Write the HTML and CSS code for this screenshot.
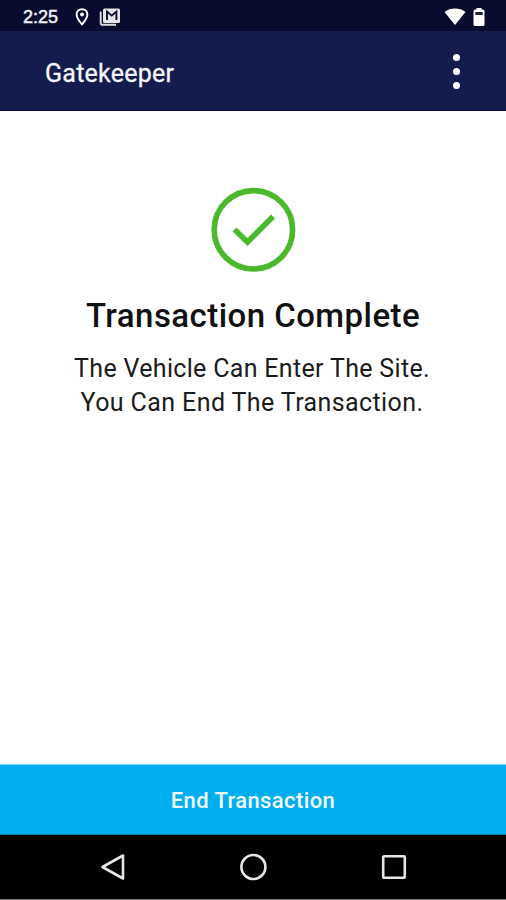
FILE: index.html
```html
<!DOCTYPE html>
<html lang="en">
<head>
<meta charset="utf-8">
<title>Gatekeeper</title>
<link rel="stylesheet" href="styles.css">
</head>
<body>
<div class="screen">
  <div class="status">
    <span class="time">2:25</span>
    <svg class="pin" width="14" height="18" viewBox="0 0 14 18"><path d="M7 1.2C3.8 1.2 1.6 3.5 1.6 6.4 1.6 10 7 16.4 7 16.4s5.400-6.400 5.400-10C12.400 3.500 10.200 1.200 7 1.200z" fill="none" stroke="#fff" stroke-width="1.900"/><circle cx="7" cy="6.500" r="2" fill="#fff"/></svg>
    <svg class="mail" width="22" height="18" viewBox="0 0 22 18"><path d="M1.700 3.500V15.500a1.200 1.200 0 0 0 1.200 1.200H17" fill="none" stroke="#ddd" stroke-width="1.900"/><rect x="4" y="0.500" width="17" height="14.500" rx="1.500" fill="#e6e6e6"/><path d="M8 12V3.600l4.700 4 4.700-4V12" fill="none" stroke="#0b0c32" stroke-width="1.900"/></svg>
    <span class="spacer"></span>
    <svg class="wifi" width="22" height="18" viewBox="0 0 22 18"><path d="M0.500 4C6.500-.6 15.500-.6 21.500 4L11 17z" fill="#fff"/></svg>
    <svg width="12" height="20" viewBox="0 0 12 20"><path d="M3.500 1h5v1.500H10A1.500 1.500 0 0 1 11.500 4v13.500A1.500 1.500 0 0 1 10 19H2A1.500 1.500 0 0 1 .5 17.500V4A1.500 1.500 0 0 1 2 2.500h1.500z" fill="#fff"/><path d="M2.300 5h7.400v3H2.300z" fill="#20213f"/></svg>
  </div>
  <header class="appbar">
    <h1 class="app-title">Gatekeeper</h1>
    <div class="menu"><i class="dot"></i><i class="dot"></i><i class="dot"></i></div>
  </header>
  <main class="content">
    <svg class="check" width="86" height="86" viewBox="0 0 86 86" fill="none" stroke="#4cb82e"><circle cx="43.400" cy="42.800" r="39.200" stroke-width="5.600"/><path d="M24.500 42.500 37.500 55 63 29.500" stroke-width="5.600"/></svg>
    <h2 class="heading">Transaction Complete</h2>
    <p class="message"><span class="line1">The Vehicle Can Enter The Site.</span><br><span class="line2">You Can End The Transaction.</span></p>
  </main>
  <button class="action">End Transaction</button>
  <nav class="navbar">
    <svg width="28" height="28" viewBox="0 0 28 28"><path d="M3.500 14 24 2.500v23z"/></svg>
    <svg width="28" height="28" viewBox="0 0 28 28"><circle cx="14.400" cy="14" r="12"/></svg>
    <svg width="28" height="28" viewBox="0 0 28 28"><rect x="3.200" y="3.200" width="21.600" height="21.600" rx="1"/></svg>
  </nav>
</div>
</body>
</html>
```
FILE: styles.css
```css
* { box-sizing: border-box; }
body { margin: 0; font-family: Roboto, sans-serif; background: #fff; }
.screen { width: 506px; height: 900px; display: flex; flex-direction: column; }
.status { height: 31px; flex: none; display: flex; align-items: center; padding: 2px 21px 0 23px; background: #080a2e; }
.time { font: 18px/20px "Liberation Sans", sans-serif; color: #f0f0f4; -webkit-text-stroke: .5px #f0f0f4; }
.pin { margin-left: 17px; }
.mail { margin-left: 10px; }
.spacer { flex: 1; }
.wifi { margin-right: 7px; }
.appbar { height: 80px; flex: none; display: flex; align-items: center; justify-content: space-between; padding: 0 46px 0 45px; background: #141b4d; border-bottom: 1px solid #08092f; }
.app-title { margin: 6px 0 0; font-size: 25px; line-height: 30px; font-weight: 400; letter-spacing: .25px; color: #f4f5fa; -webkit-text-stroke: .3px #f4f5fa; }
.menu { display: flex; flex-direction: column; gap: 7px; margin-top: 1px; }
.dot { width: 7px; height: 7px; border-radius: 50%; background: #fff; }
.content { flex: 1; display: flex; flex-direction: column; align-items: center; padding-top: 76px; }
.heading { margin: 23px 0 0; font-size: 33px; line-height: 40px; font-weight: 500; letter-spacing: .45px; color: #111; white-space: nowrap; }
.message { margin: 16px 2px 0 0; font-size: 25px; line-height: 34px; text-align: center; color: #1b1b1b; white-space: nowrap; }
.line1 { letter-spacing: .32px; }
.line2 { letter-spacing: .4px; }
.action { height: 71px; flex: none; border: 0; border-top: 1px solid #79d2f7; border-bottom: 1px solid #0581b3; padding: 3px 0 0; background: #00aeef; color: #f2fbff; font: 500 22px/28px Roboto, sans-serif; letter-spacing: .4px; }
.navbar { height: 65px; flex: none; display: flex; align-items: center; justify-content: center; gap: 112.500px; background: #000; border-bottom: 1px solid #777; }
.navbar svg { fill: none; stroke: #e6e6e6; stroke-width: 2.600; stroke-linejoin: round; }
```
